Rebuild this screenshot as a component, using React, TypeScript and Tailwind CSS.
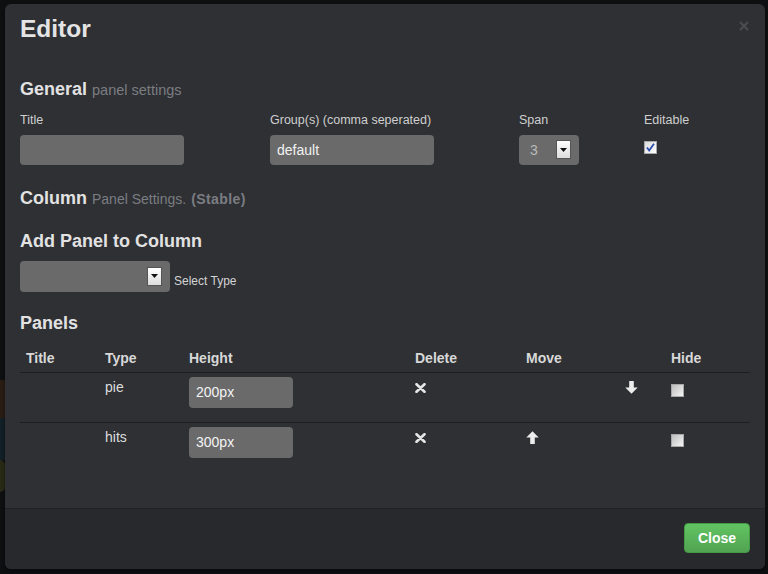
import React from "react";

const font = "font-['Liberation_Sans',Arial,Helvetica,sans-serif]";

function DropButton() {
  return (
    <div className="w-[15px] h-[19px] border border-[#555] bg-gradient-to-b from-white to-[#dcdcdc] flex items-center justify-center">
      <svg width="7" height="4" viewBox="0 0 7 4">
        <path d="M0 0h7L3.5 4z" fill="#111" />
      </svg>
    </div>
  );
}

function Check({ checked }: { checked?: boolean }) {
  return (
    <div
      className={
        "w-[13px] h-[13px] border border-[#a8a8a8] flex items-center justify-center " +
        (checked ? "bg-gradient-to-br from-[#dcdcdc] to-white" : "bg-gradient-to-br from-[#bdbdbd] to-[#f6f6f6]")
      }
    >
      {checked && (
        <svg width="9" height="9" viewBox="0 0 9 9">
          <path d="M1 4.5l2.2 3L8 .8" stroke="#2f4fb0" strokeWidth="1.8" fill="none" />
        </svg>
      )}
    </div>
  );
}

function RemoveIcon() {
  return (
    <svg width="11" height="10" viewBox="0 0 11 10" className="mt-[6px] ml-[6px]">
      <path d="M1.5 1.2l8 7.6M9.5 1.2l-8 7.6" stroke="#e6e6e6" strokeWidth="2.6" strokeLinecap="round" />
    </svg>
  );
}

function Arrow({ up }: { up?: boolean }) {
  return (
    <svg width="13" height="13" viewBox="0 0 13 13" className="mt-[4px] ml-[6px]">
      <path
        d={up ? "M4.2 13V6.6H0.3L6.5 0.3l6.2 6.3H8.8V13z" : "M4.2 0v6.4H0.3l6.2 6.3 6.2-6.3H8.8V0z"}
        fill="#ececec"
      />
    </svg>
  );
}

const cols = "grid grid-cols-[79px_84px_226px_111px_99px_46px_85px]";

function PanelRow({
  type,
  height,
  up,
  down,
  last,
}: {
  type: string;
  height: string;
  up?: boolean;
  down?: boolean;
  last?: boolean;
}) {
  return (
    <div className={cols + (last ? "" : " border-b border-[#1d1e21]") + " text-[14px] leading-[20px] text-[#dedede]"}>
      <div className="pt-[4px] pl-[6px]" />
      <div className="pt-[4px] pl-[6px]">{type}</div>
      <div className="pt-[4px] pl-[6px] pb-[14px]">
        <input
          readOnly
          defaultValue={height}
          className="w-[104px] h-[31px] rounded-[4px] bg-[#6a6a6a] px-[7px] text-[14px] text-[#f4f4f4] outline-none"
        />
      </div>
      <div className="pt-[4px]">
        <RemoveIcon />
      </div>
      <div className="pt-[4px]">{up && <Arrow up />}</div>
      <div className="pt-[4px]">{down && <Arrow />}</div>
      <div className="pt-[11px] pl-[6px]">
        <Check />
      </div>
    </div>
  );
}

export default function App() {
  return (
    <div className={font + " w-[768px] h-[574px] bg-[#0f1012] flex overflow-hidden"}>
      <div className="w-[5px] shrink-0 flex flex-col pt-[380px]">
        <div className="h-[38px] bg-[#2c1f15]" />
        <div className="h-[42px] bg-[#14222a]" />
        <div className="h-[32px] bg-[#2c2d17] rounded-r-full" />
      </div>

      <div className="mt-[4px] w-[760px] h-[565px] rounded-[6px] bg-[#2e3034] flex flex-col overflow-hidden shadow-[0_3px_7px_rgba(0,0,0,0.5)]">
        <div className="flex items-start justify-between pl-[15px] pr-[16px] pt-[9.5px]">
          <h3 className="text-[24.5px] leading-[30px] font-bold text-[#e4e4e4]">Editor</h3>
          <svg width="10" height="10" viewBox="0 0 10 10" className="mt-[7.5px]">
            <path d="M1 1l8 8M9 1L1 9" stroke="#4a4c50" strokeWidth="2.2" />
          </svg>
        </div>

        <div className="flex-1 px-[15px]">
          <h4 className="mt-[33px] text-[18px] leading-[24px] font-bold text-[#e2e2e2]">
            General <span className="text-[14.5px] font-normal text-[#7b7d82]">panel settings</span>
          </h4>

          <div className="mt-[9px] grid grid-cols-[250px_249px_125px_1fr] text-[12.5px] leading-[18px] text-[#cfcfcf]">
            <div>
              <div>Title</div>
              <input
                readOnly
                className="mt-[6px] w-[164px] h-[30px] rounded-[4px] bg-[#6a6a6a] px-[7px] text-[14px] text-[#f2f2f2] outline-none"
              />
            </div>
            <div>
              <div>Group(s) (comma seperated)</div>
              <input
                readOnly
                defaultValue="default"
                className="mt-[6px] w-[164px] h-[30px] rounded-[4px] bg-[#6a6a6a] px-[7px] text-[14px] text-[#f2f2f2] outline-none"
              />
            </div>
            <div>
              <div>Span</div>
              <div className="mt-[6px] w-[60px] h-[30px] rounded-[4px] bg-[#6a6a6a] flex items-center justify-between pl-[11px] pr-[8px]">
                <span className="text-[14px] text-[#b9b9b9]">3</span>
                <DropButton />
              </div>
            </div>
            <div>
              <div>Editable</div>
              <div className="mt-[12.5px]">
                <Check checked />
              </div>
            </div>
          </div>

          <h4 className="mt-[21px] text-[18px] leading-[24px] font-bold text-[#e2e2e2]">
            Column <span className="text-[14px] font-normal text-[#7b7d82]">Panel Settings.</span>{" "}
            <span className="text-[14px] font-bold tracking-[0.4px] text-[#7b7d82]">(Stable)</span>
          </h4>

          <h4 className="mt-[18.5px] text-[18px] leading-[24px] font-bold text-[#e2e2e2]">Add Panel to Column</h4>

          <div className="mt-[7.5px] flex items-end gap-[4px]">
            <div className="w-[150px] h-[31px] rounded-[4px] bg-[#6a6a6a] flex items-center justify-end pr-[8px]">
              <DropButton />
            </div>
            <span className="text-[12px] leading-[18px] text-[#d4d4d4] mb-[2px]">Select Type</span>
          </div>

          <h4 className="mt-[19.5px] text-[18px] leading-[24px] font-bold text-[#e2e2e2]">Panels</h4>

          <div className="mt-[8.5px] w-[730px]">
            <div className={cols + " border-b border-[#1d1e21] text-[14px] leading-[20px] font-bold text-[#d8d8d8]"}>
              <div className="py-[4px] pl-[6px]">Title</div>
              <div className="py-[4px] pl-[6px]">Type</div>
              <div className="py-[4px] pl-[6px]">Height</div>
              <div className="py-[4px] pl-[6px]">Delete</div>
              <div className="py-[4px] pl-[6px]">Move</div>
              <div className="py-[4px] pl-[6px]" />
              <div className="py-[4px] pl-[6px]">Hide</div>
            </div>
            <PanelRow type="pie" height="200px" down />
            <PanelRow type="hits" height="300px" up last />
          </div>
        </div>

        <div className="h-[61px] border-t border-[#1f2124] bg-[#27292d] flex justify-end items-start pt-[14px] pr-[15px]">
          <button className="w-[66px] h-[30px] rounded-[4px] border border-[#459a45] bg-gradient-to-b from-[#62c462] to-[#51a351] text-[14px] font-bold text-white">
            Close
          </button>
        </div>
      </div>
    </div>
  );
}
